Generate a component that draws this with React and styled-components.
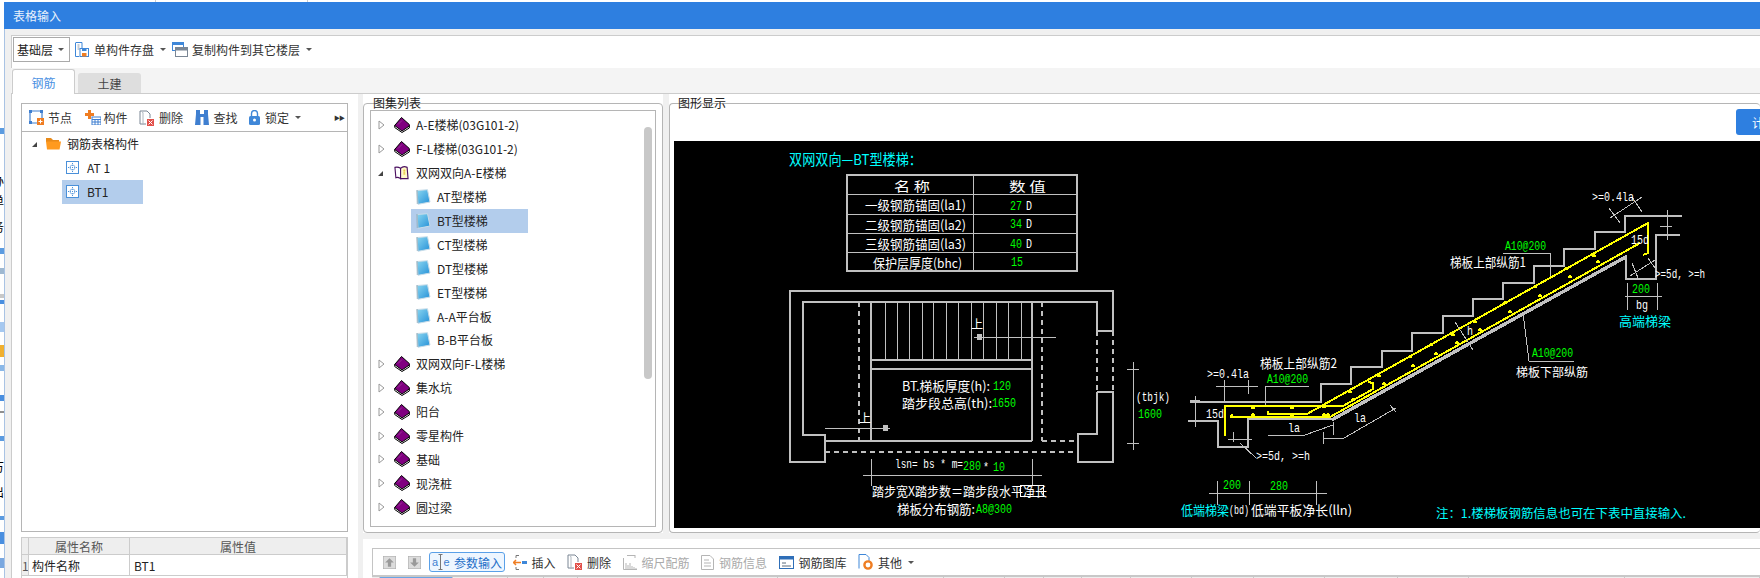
import React from 'react';
import styled, { createGlobalStyle } from 'styled-components';

const GlobalStyle = createGlobalStyle`
    html, body {
        margin: 0;
        padding: 0;
        background: #fff;
        overflow: hidden;
    }
    body {
        font-family: "Noto Sans CJK SC", "Noto Sans", sans-serif;
        font-size: 12px;
        color: #222;
    }
`;

const Page = styled.div`
    display: flex;
    width: 1760px;
    height: 578px;
    overflow: hidden;
`;

const Sliver = styled.svg`
    display: block;
    flex: none;
    width: 4px;
    height: 578px;
`;

const Window = styled.div`
    flex: 1;
    min-width: 0;
    display: flex;
    flex-direction: column;
    background: #f0f0f0;
`;

const TopEdge = styled.div`
    height: 2px;
    background: linear-gradient(#ccc, #ccc) 151px 0 / 1px 2px no-repeat,
        linear-gradient(#ccc, #ccc) 303px 0 / 1px 2px no-repeat, #fff;
`;

const TitleBar = styled.div`
    height: 27px;
    flex: none;
    display: flex;
    align-items: center;
    padding-left: 9px;
    background: #2e7fe0;
    color: #e8f1fc;
`;

const WindowBody = styled.div`
    flex: 1;
    min-height: 0;
    display: flex;
    flex-direction: column;
    padding: 6px 0 0 6px;
    border-left: 1px solid #a9c3e4;
`;

const TopToolbar = styled.div`
    height: 33px;
    flex: none;
    display: flex;
    align-items: center;
    padding: 0 0 5px 1px;
    box-sizing: border-box;
    background: #fff;
    border-top: 1px solid #ccc;
    border-left: 1px solid #ccc;
    color: #333;
`;

const Combo = styled.div`
    width: 57px;
    height: 25px;
    box-sizing: border-box;
    display: flex;
    align-items: center;
    justify-content: space-between;
    padding: 0 5px 0 3px;
    margin-right: 5px;
    border: 1px solid #aaa;
    color: #222;
`;

const Caret = styled.span`
    flex: none;
    width: 0;
    height: 0;
    margin: ${p => p.$margin || '0'};
    border-left: 3px solid transparent;
    border-right: 3px solid transparent;
    border-top: 3px solid #555;
`;

const ToolLabel = styled.span`
    margin-left: ${p => p.$gap || 5}px;
    white-space: nowrap;
    color: ${p => (p.$disabled ? '#aaa' : 'inherit')};
`;

const TabRow = styled.div`
    height: 25px;
    flex: none;
    display: flex;
    align-items: flex-end;
    gap: 3px;
    padding-left: 1px;
    background: #f4f4f4;
`;

const Tab = styled.div`
    width: ${p => p.$w}px;
    height: ${p => (p.$active ? 25 : 20)}px;
    box-sizing: border-box;
    display: flex;
    align-items: center;
    justify-content: center;
    border-radius: 3px 3px 0 0;
    background: ${p => (p.$active ? '#fff' : '#dedede')};
    color: ${p => (p.$active ? '#4a90e2' : '#444')};
    border: ${p => (p.$active ? '1px solid #ccc' : 'none')};
    border-bottom: none;
    position: relative;
    z-index: 1;
    margin-bottom: ${p => (p.$active ? -1 : 0)}px;
`;

const Main = styled.div`
    flex: 1;
    min-height: 0;
    display: flex;
    border-top: 1px solid #ccc;
    border-left: 1px solid #ccc;
`;

const LeftColumn = styled.div`
    width: 346px;
    flex: none;
    box-sizing: border-box;
    display: flex;
    flex-direction: column;
    padding: 9px 10px 0 9px;
    background: #fff;
`;

const LeftToolbar = styled.div`
    height: 28px;
    flex: none;
    box-sizing: border-box;
    display: flex;
    align-items: center;
    gap: 3.5px;
    padding: 0 3px 0 3px;
    border: 1px solid #b5b5b5;
    border-bottom: none;
    color: #333;
`;

const ToolButton = styled.div`
    display: flex;
    align-items: center;
    height: 20px;
    box-sizing: border-box;
    padding: 0 ${p => p.$pad ?? 4}px;
    flex: none;
    border-radius: 3px;
    border: ${p => (p.$active ? '1px solid #5aa0e8' : 'none')};
    background: ${p => (p.$active ? '#eef6ff' : 'transparent')};
    color: ${p => (p.$active ? '#1f6fc8' : 'inherit')};
`;

const MoreMark = styled.span`
    margin-left: auto;
    font-size: 6px;
    letter-spacing: -1px;
    color: #333;
`;

const TreeBox = styled.div`
    flex: 1;
    min-height: 0;
    position: relative;
    border: 1px solid #b5b5b5;
    background: #fff;
    padding-top: ${p => p.$top}px;
    overflow: hidden;
`;

const RootRow = styled.div`
    display: flex;
    align-items: center;
    height: 23.9px;
    padding-left: ${p => p.$pad}px;
`;

const ArrowOpen = styled.span`
    flex: none;
    width: 0;
    height: 0;
    margin: 2px ${p => p.$after}px 0 0;
    border-left: 5px solid transparent;
    border-bottom: 5px solid #444;
`;

const ItemRow = styled.div`
    height: 23.9px;
    display: flex;
    align-items: center;
    padding-left: ${p => p.$pad}px;
`;

const ItemCell = styled.div`
    width: ${p => p.$w}px;
    height: 24px;
    box-sizing: border-box;
    display: flex;
    align-items: center;
    padding-left: ${p => p.$inner}px;
    background: ${p => (p.$selected ? '#b3cdec' : 'transparent')};
`;

const PropGrid = styled.div`
    flex: none;
    margin-top: 5px;
    display: grid;
    grid-template-columns: 7px 101px 217px;
    grid-template-rows: 17px 21px 2px;
    border-left: 1px solid #ccc;
    border-right: 1px solid #ccc;
    border-top: 1px solid #ccc;
`;

const PropHead = styled.div`
    display: flex;
    align-items: center;
    justify-content: center;
    background: #eee;
    color: #555;
    border-right: 1px solid #ccc;
    border-bottom: 1px solid #ccc;
`;

const PropCell = styled.div`
    display: flex;
    align-items: center;
    padding-left: ${p => p.$pad || 0}px;
    background: ${p => (p.$head ? '#eee' : '#fff')};
    color: ${p => (p.$head ? '#555' : '#222')};
    border-right: 1px solid #ccc;
    border-bottom: 1px solid #ccc;
    overflow: hidden;
`;

const Splitter = styled.div`
    width: 5px;
    flex: none;
`;

const RightArea = styled.div`
    flex: 1;
    min-width: 0;
    display: flex;
    flex-direction: column;
`;

const PanelRow = styled.div`
    height: 439px;
    flex: none;
    display: flex;
    gap: 6px;
`;

const GroupPanel = styled.div`
    background: #fff;
    width: ${p => (p.$w ? `${p.$w}px` : 'auto')};
    flex: ${p => (p.$w ? 'none' : '1')};
    min-width: 0;
    box-sizing: border-box;
    padding-top: 9px;
`;

const GroupBox = styled.div`
    position: relative;
    height: 430px;
    box-sizing: border-box;
    display: flex;
    flex-direction: column;
    border: 1px solid #b5b5b5;
    border-right: ${p => (p.$open ? 'none' : '1px solid #b5b5b5')};
    border-radius: 4px;
    padding: ${p => p.$pad};
`;

const Legend = styled.span`
    position: absolute;
    left: ${p => p.$left}px;
    top: -8px;
    line-height: 14px;
    color: #222;
`;

const ScrollThumb = styled.div`
    position: absolute;
    right: 3px;
    top: 16px;
    width: 8px;
    height: 252px;
    border-radius: 4px;
    background: #c8c8c8;
`;

const ActionRow = styled.div`
    height: 37px;
    flex: none;
    display: flex;
    justify-content: flex-end;
    padding-top: 5px;
    box-sizing: border-box;
`;

const CalcButton = styled.div`
    width: 24px;
    height: 26px;
    box-sizing: border-box;
    padding: 5px 0 0 16px;
    background: #2e7fe0;
    color: #fff;
    border-radius: 3px 0 0 3px;
    overflow: hidden;
    white-space: nowrap;
`;

const CadSvg = styled.svg`
    display: block;
    width: 1086px;
    height: 387px;
    background: #000;
    shape-rendering: crispEdges;
`;

const GrayLine = styled.path`
    fill: none;
    stroke: ${p => p.$color || '#c0c0c0'};
    stroke-width: ${p => p.$w || 2};
    stroke-dasharray: ${p => p.$dash || 'none'};
`;

const CadText = styled.text`
    font-family: ${p => (p.$mono ? '"Liberation Mono", monospace' : '"Noto Sans CJK SC", sans-serif')};
    font-size: ${p => p.$size || 13}px;
    fill: ${p => p.$color || '#fff'};
`;

const BottomBand = styled.div`
    height: 6px;
    flex: none;
`;

const BottomPanel = styled.div`
    flex: 1;
    min-height: 0;
    background: #fff;
    padding: 9px 0 0 9px;
    display: flex;
    flex-direction: column;
`;

const ParamToolbar = styled.div`
    height: 27px;
    flex: none;
    box-sizing: border-box;
    display: flex;
    align-items: center;
    gap: 3.5px;
    padding-left: 5px;
    border: 1px solid #c4c4c4;
    border-right: none;
    border-bottom: none;
    color: #333;
`;

const HeaderStrip = styled.div`
    height: 3px;
    flex: none;
    display: flex;
    background: #eee;
    border-top: 2px solid #c8c8c8;
`;

const HeaderCell = styled.div`
    flex: none;
    width: ${p => p.$w}px;
    box-sizing: border-box;
    background: ${p => (p.$active ? '#6aa5e6' : 'transparent')};
    border-right: 1px solid #c8c8c8;
`;

const IconSvg = styled.svg`
    display: block;
    flex: none;
    width: ${p => p.$w || 16}px;
    height: ${p => p.$h || 16}px;
    margin-right: ${p => p.$after || 0}px;
`;

const ClosedArrow = () => (
    <IconSvg viewBox="0 0 7 10" $w={7} $h={10} $after={9}>
        <path d="M1 1L6 5L1 9Z" fill="#fff" stroke="#999" />
    </IconSvg>
);

const BookIcon = () => (
    <IconSvg viewBox="0 0 16 16" $w={16} $h={16} $after={6}>
        <path d="M.7 8.5V10.5L8 15.5L15.3 11V9Z" fill="#fff" stroke="#000" strokeWidth="1" />
        <path d="M.7 8.5L7.5 .5L15.3 7.5V9L8 14Z" fill="#800080" stroke="#000" strokeWidth="1" />
        <path d="M4 7.5L8 3.5" stroke="#a040a0" strokeWidth=".8" />
    </IconSvg>
);

const OpenBookIcon = () => (
    <IconSvg viewBox="0 0 16 16" $w={15} $h={16} $after={7}>
        <path d="M1 2 Q4 1 7 3 L7 14 Q4 12 2 13Z" fill="#fff" stroke="#4b1060" strokeWidth="1.2" />
        <path d="M7 3 Q10 0 14 2 L15 14 L7 14Z" fill="#fff8c8" stroke="#4b1060" strokeWidth="1.2" />
        <path d="M10 5H12M10 7H12M10 9H12" stroke="#e0b000" strokeWidth="1" />
    </IconSvg>
);

const PageIcon = () => (
    <IconSvg viewBox="0 0 15 16" $w={15} $h={16} $after={6}>
        <defs>
            <linearGradient id="pageFill" x1="0" y1="0" x2="1" y2="1">
                <stop offset="0" stopColor="#8ad6f0" />
                <stop offset="1" stopColor="#2490d8" />
            </linearGradient>
        </defs>
        <path d="M1 1.5 L11.5 .7 L14 13 L2 15.3Z" fill="url(#pageFill)" stroke="#c8dce8" strokeWidth="1" />
        <path d="M1 1.5L1.5 15.3" stroke="#7f9cab" strokeWidth="1.6" strokeDasharray="1 1" />
    </IconSvg>
);

const FolderIcon = () => (
    <IconSvg viewBox="0 0 15 13" $w={15} $h={13} $after={6}>
        <path d="M0 1 H5 L7 3 H13 V5 H0Z" fill="#e88a1a" />
        <path d="M0 4.5 H15 L13.5 12.5 H1Z" fill="#ff9a1f" />
    </IconSvg>
);

const ComponentIcon = () => (
    <IconSvg viewBox="0 0 13 13" $w={13} $h={13} $after={8}>
        <rect x="0.5" y="0.5" width="12" height="12" fill="#fff" stroke="#4a90d9" />
        <path d="M6.5 2V11M2 6.5H11" stroke="#4a90d9" strokeDasharray="1 1" />
        <path d="M4 6.5A2.5 2.5 0 0 1 9 6.5A2.5 2.5 0 0 1 4 6.5" fill="none" stroke="#8ab8e8" />
    </IconSvg>
);

const NodeIcon = () => (
    <IconSvg viewBox="0 0 15 15" $w={15} $h={15}>
        <path d="M1 1H13V8M8 13H1V1" fill="none" stroke="#3f7fd0" strokeWidth="1.2" />
        <path d="M0 0h3v3H0zM11 0h3v3h-3zM0 11h3v3H0z" fill="#3f7fd0" />
        <rect x="8" y="8" width="7" height="7" fill="#ef7d22" />
        <path d="M11.5 9.5v4M9.5 11.5h4" stroke="#fff" />
    </IconSvg>
);

const PartIcon = () => (
    <IconSvg viewBox="0 0 17 15" $w={17} $h={15}>
        <path d="M4 0v3H1v3h3v3h3V6h3V3H7V0z" fill="#ef7d22" />
        <rect x="8" y="7" width="9" height="8" fill="#fff" stroke="#3f7fd0" />
        <path d="M8 9.5h9M11 9.5V15M14 9.5V15M8 12h9" stroke="#3f7fd0" />
    </IconSvg>
);

const DeleteIcon = () => (
    <IconSvg viewBox="0 0 15 16" $w={15} $h={16}>
        <path d="M1 1H8L11 4V8M7 14H1V1" fill="none" stroke="#7a8694" />
        <path d="M3.5 3V2.5H4V15" fill="none" stroke="#b0b8c0" />
        <rect x="8" y="9" width="7" height="7" fill="#e2504a" />
        <path d="M9.5 10.5l4 4M13.5 10.5l-4 4" stroke="#fff" />
    </IconSvg>
);

const FindIcon = () => (
    <IconSvg viewBox="0 0 14 15" $w={14} $h={15}>
        <path d="M1 0H5V4H9V0H13V4L14 15H8.5V7H5.5V15H0L1 4Z" fill="#3f7fd0" />
    </IconSvg>
);

const LockIcon = () => (
    <IconSvg viewBox="0 0 11 15" $w={11} $h={15}>
        <path d="M2.5 6V3.5A3 3 0 0 1 8.5 3.5V6" fill="none" stroke="#3f87d8" strokeWidth="1.4" />
        <rect x="0" y="6" width="11" height="9" rx="1.5" fill="#3f87d8" />
        <circle cx="5.5" cy="10" r="1.5" fill="#fff" />
    </IconSvg>
);

const SaveIcon = () => (
    <IconSvg viewBox="0 0 14 15" $w={14} $h={15}>
        <path d="M1 .5H7V6M4 14.5H.5V.5" fill="none" stroke="#3f87d8" />
        <path d="M2.5 3h2M2.5 5h2M2.5 7h2" stroke="#8a98a8" />
        <rect x="5" y="6.5" width="8.5" height="8" fill="#fff" stroke="#3f87d8" />
        <rect x="7" y="11" width="4.5" height="3.5" fill="#ef7d22" />
        <rect x="7" y="7" width="4.5" height="2" fill="#3f87d8" />
    </IconSvg>
);

const CopyIcon = () => (
    <IconSvg viewBox="0 0 16 15" $w={16} $h={15}>
        <rect x=".5" y=".5" width="11" height="8" fill="#fff" stroke="#3f87d8" />
        <rect x=".5" y=".5" width="11" height="2.5" fill="#3f87d8" />
        <rect x="3.5" y="5.5" width="12" height="9" fill="#fff" stroke="#7a8694" />
        <rect x="3.5" y="5.5" width="12" height="3" fill="#7a8694" />
    </IconSvg>
);

const ArrowBoxIcon = ({ down }) => (
    <IconSvg viewBox="0 0 12 12" $w={13} $h={13}>
        <rect width="12" height="12" fill="#dcdcdc" stroke="#aaa" />
        <path d={down ? 'M6 10L2 6H4.5V2H7.5V6H10Z' : 'M6 2L10 6H7.5V10H4.5V6H2Z'} fill="#9a9a9a" />
    </IconSvg>
);

const ParamIcon = () => (
    <IconSvg viewBox="0 0 18 16" $w={18} $h={16}>
        <text x="0" y="12" fontSize="11" fill="#3f7fd0" fontFamily="Liberation Sans">a</text>
        <text x="11.5" y="12" fontSize="11" fill="#3f7fd0" fontFamily="Liberation Sans">e</text>
        <path d="M8.5 1V15M6.5 .5H10.5M6.5 15.5H10.5" stroke="#777" fill="none" />
    </IconSvg>
);

const InsertIcon = () => (
    <IconSvg viewBox="0 0 14 15" $w={14} $h={15}>
        <path d="M3 .5H6M3 14.5H6M3 .5V3M3 12V14.5" stroke="#777" fill="none" />
        <path d="M8 7.5H0M3 5L.5 7.5L3 10" stroke="#ef7d22" strokeWidth="1.5" fill="none" />
        <path d="M9 6h5v3H9z" fill="#3f87d8" />
    </IconSvg>
);

const ScaleIcon = () => (
    <IconSvg viewBox="0 0 14 15" $w={14} $h={15}>
        <path d="M.5 3V14.5H14M3 14V8M5 14V10M7 14V8M9 14V11M11 14V12M13 14V13M4 .5H12M12 0V3" stroke="#b5b5b5" fill="none" />
    </IconSvg>
);

const InfoIcon = () => (
    <IconSvg viewBox="0 0 13 15" $w={13} $h={15}>
        <path d="M.5.5H9L12.5 4V14.5H.5Z" fill="#fff" stroke="#b5b5b5" />
        <path d="M3 5H8M3 8H10M3 11H10" stroke="#b5b5b5" />
    </IconSvg>
);

const LibraryIcon = () => (
    <IconSvg viewBox="0 0 15 13" $w={15} $h={13}>
        <rect x=".5" y=".5" width="14" height="12" fill="#fff" stroke="#2f6fb8" />
        <rect x=".5" y=".5" width="14" height="3" fill="#2f6fb8" />
        <path d="M3 7H7M3 10H12" stroke="#5a6a7a" />
    </IconSvg>
);

const OtherIcon = () => (
    <IconSvg viewBox="0 0 15 16" $w={15} $h={16}>
        <path d="M1 14.5V.5H8L11 3.5V7" fill="none" stroke="#3f87d8" />
        <circle cx="10" cy="11" r="3.6" fill="none" stroke="#ef7d22" strokeWidth="2.4" />
    </IconSvg>
);

const sliverMarks = [
    ['#5b9be0', 128, 6], ['#5b9be0', 248, 6], ['#9fb8d0', 268, 6], ['#c8c8c8', 294, 4],
    ['#4a8fe0', 300, 4], ['#a5c8f0', 322, 10], ['#f0b030', 345, 12], ['#8ab8e8', 365, 6],
    ['#4a8fe0', 395, 6], ['#8f8f8f', 411, 2], ['#5b9be0', 436, 5], ['#5b9be0', 516, 4],
    ['#4a8fe0', 532, 12], ['#7aa8e0', 558, 10],
];

const sliverText = [['办', 186], ['单', 206], ['务', 232], ['万', 472], ['出', 497]];

const floorTree = [
    { name: 'A-E楼梯(03G101-2)' },
    { name: 'F-L楼梯(03G101-2)' },
    {
        name: '双网双向A-E楼梯',
        open: true,
        items: ['AT型楼梯', 'BT型楼梯', 'CT型楼梯', 'DT型楼梯', 'ET型楼梯', 'A-A平台板', 'B-B平台板'],
    },
    { name: '双网双向F-L楼梯' },
    { name: '集水坑' },
    { name: '阳台' },
    { name: '零星构件' },
    { name: '基础' },
    { name: '现浇桩' },
    { name: '圆过梁' },
];

const bottomCols = [8, 73, 55, 36, 34, 200, 166, 61, 39, 38, 49, 61, 62, 71, 73, 71, 156, 135];

const cyan = '#00ffff';
const green = '#00ff00';

// x, center y, width, size, color, text
const cadTexts = [
    [789, 159, 133, 15, cyan, '双网双向—BT型楼梯：'],
    [894, 186, 36, 13, null, '名  称'],
    [1009, 186, 37, 13, null, '数  值'],
    [865, 205, 101, 13, null, '一级钢筋锚固(la1)'],
    [865, 225, 101, 13, null, '二级钢筋锚固(la2)'],
    [865, 244, 101, 13, null, '三级钢筋锚固(la3)'],
    [873, 263, 89, 13, null, '保护层厚度(bhc)'],
    [902, 386, 88, 13, null, 'BT.梯板厚度(h):'],
    [902, 403, 90, 13, null, '踏步段总高(th):'],
    [872, 491, 175, 13, null, '踏步宽X踏步数＝踏步段水平净长'],
    [897, 509, 78, 13, null, '梯板分布钢筋:'],
    [1260, 363, 77, 13, null, '梯板上部纵筋2'],
    [1450, 262, 76, 13, null, '梯板上部纵筋1'],
    [1516, 372, 72, 12, null, '梯板下部纵筋'],
    [1619, 321, 52, 13, cyan, '高端梯梁'],
    [1181, 510, 48, 13, cyan, '低端梯梁'],
    [1251, 510, 101, 13, null, '低端平板净长(lln)'],
    [1436, 513, 250, 12, cyan, '注：1.楼梯板钢筋信息也可在下表中直接输入.'],
];

// x, center y, width, color, text
const cadMono = [
    [1010, 206, 12, green, '27'], [1026, 206, 6, null, 'D'],
    [1010, 224, 12, green, '34'], [1026, 224, 6, null, 'D'],
    [1010, 244, 12, green, '40'], [1026, 244, 6, null, 'D'],
    [1011, 262, 12, green, '15'],
    [993, 386, 18, green, '120'],
    [992, 403, 24, green, '1650'],
    [1136, 397, 34, null, '(tbjk)'],
    [1138, 414, 24, green, '1600'],
    [895, 464, 68, null, 'lsn= bs * m='],
    [963, 466, 18, green, '280'],
    [983, 467, 6, null, '*'],
    [993, 467, 12, green, '10'],
    [976, 509, 36, green, 'A8@300'],
    [1267, 379, 41, green, 'A10@200'],
    [1505, 246, 41, green, 'A10@200'],
    [1532, 353, 41, green, 'A10@200'],
    [1207, 374, 42, null, '>=0.4la'],
    [1592, 197, 42, null, '>=0.4la'],
    [1206, 414, 18, null, '15d'],
    [1631, 240, 18, null, '15d'],
    [1256, 456, 54, null, '>=5d, >=h'],
    [1655, 274, 50, null, '>=5d, >=h'],
    [1288, 428, 12, null, 'la'],
    [1354, 418, 12, null, 'la'],
    [1467, 331, 6, null, 'h'],
    [1223, 485, 18, green, '200'],
    [1270, 486, 18, green, '280'],
    [1632, 289, 18, green, '200'],
    [1636, 305, 12, null, 'bg'],
    [1229, 510, 20, null, '(bd)'],
];

const treadLines = [344, 380, 417, 455, 490, 528, 565, 602, 640, 677, 713, 752]
    .map(px => `M${Math.round(770 + px / 3)} 302V360`)
    .join('');

const barDots = [
    [73, 620], [150, 577], [238, 527], [330, 472], [392, 435], [458, 405], [525, 365], [615, 310],
    [705, 262], [797, 208], [883, 168], [85, 645], [160, 600], [252, 552], [340, 497], [408, 462],
    [472, 430], [540, 390], [630, 335], [720, 287], [810, 230], [893, 187],
].map(([x, y]) => [1300 + x / 3, 200 + y / 3]);

const flatDots = [[280, 235], [280, 255], [395, 235], [395, 258], [493, 232], [493, 255]]
    .map(([x, y]) => [1160 + x / 3, 330 + y / 3]);

const dotPath = [...barDots, ...flatDots]
    .map(([x, y]) => `M${Math.round(x) - 2} ${Math.round(y)}h4M${Math.round(x)} ${Math.round(y) - 2}v3`)
    .join('');

const StairDrawing = () => (
    <CadSvg viewBox="674 141 1086 387">
        {/* 表格 */}
        <GrayLine d="M847 175H1077V271H847Z" />
        <GrayLine $w={1} d="M973 175V271M847 194H1077M847 214H1077M847 233H1077M847 252H1077" />

        {/* 平面图 */}
        <GrayLine d="M1113 331V291H790V462H825V435H803V302H1097V331H1113" />
        <GrayLine d="M1097 392H1113V462H1078V434H1097V392" />
        <GrayLine $dash="5 4" d="M1097 331V392M1113 331V392" />
        <GrayLine d="M871 302V441M1032 302V441M825 441H1032M871 360H1032M871 369H1032" />
        <GrayLine $dash="5 4" d="M859 302V441M1042 302V441M1042 441H1078M825 452H1078" />
        <GrayLine $w={1} d={treadLines} />
        <GrayLine $w={1} d="M974 337H1056M825 428H890M1133 362V450M1127 369H1139M1127 443H1139M863 475H1042M871 459V486M1032 459V486" />
        <GrayLine $w={1} $color="#fff" d="M1020 485H1043V496H1020Z" />
        <path d="M977 334h5v6h-5zM883 425h5v6h-5z" fill="#c0c0c0" />

        {/* 剖面图 */}
        <GrayLine d="M1190 402H1321V384H1351V367H1382V351H1412V333H1443V316H1473V299H1503V283H1534V266H1564V249H1595V232H1625V216H1682" />
        <GrayLine d="M1680 235H1656V279H1626V256L1332 419H1248V447H1218V421H1188" />
        <GrayLine $w={3} d="M1332 420L1626 257" />
        <GrayLine
            $color="#ffff00"
            d="M1225 436V406H1343L1373 389V383L1368 382M1268 411V414H1307L1648 223V253L1643 255M1232 414L1231 417H1330L1640 243"
        />
        <GrayLine $color="#ffff00" $w={1.5} d={dotPath} />
        <GrayLine
            $w={1}
            d="M1265 405V386H1309M1216 386H1258M1224 380V402M1248 380V394M1190 400H1200M1195 396V427M1188 421H1200M1233 432V442M1228 439H1252M1240 443L1256 458M1268 435H1305L1333 425M1333 422V435M1323 438H1344L1396 408M1390 405L1396 412M1323 432V444M1209 493H1327M1217 481V505M1249 481V505M1316 481V505"
        />
        <GrayLine
            $w={1}
            d="M1503 253H1550V276M1523 313L1529 361H1574M1610 218L1642 197M1609 208L1620 223M1632 197L1642 212M1667 210V240M1660 226H1672M1630 276L1655 260M1632 263L1638 278M1648 258L1655 268M1625 296H1662M1627 283V310M1657 283V310M1455 322L1473 350"
        />

        <CadText x="971" y="329" $size={12}>上</CadText>
        <CadText x="859" y="423" $size={12}>上</CadText>

        {cadTexts.map(([x, y, w, size, color, text]) => (
            <CadText
                key={`${x}-${y}`}
                x={x}
                y={y + size * 0.38}
                $size={size}
                $color={color}
                textLength={w}
                lengthAdjust="spacingAndGlyphs"
            >
                {text}
            </CadText>
        ))}
        {cadMono.map(([x, y, w, color, text]) => (
            <CadText
                key={`${x}-${y}-${text}`}
                x={x}
                y={y + 4}
                $mono
                $size={13}
                $color={color}
                textLength={w}
                lengthAdjust="spacingAndGlyphs"
            >
                {text}
            </CadText>
        ))}
    </CadSvg>
);

const FloorTree = () => (
    <TreeBox $top={2}>
        {floorTree.map(group => (
            <React.Fragment key={group.name}>
                <RootRow $pad={7}>
                    {group.open ? <ArrowOpen $after={11} /> : <ClosedArrow />}
                    {group.open ? <OpenBookIcon /> : <BookIcon />}
                    {group.name}
                </RootRow>
                {group.items && group.items.map(item => (
                    <ItemRow key={item} $pad={40}>
                        <ItemCell $w={117} $inner={5} $selected={item === 'BT型楼梯'}>
                            <PageIcon />
                            {item}
                        </ItemCell>
                    </ItemRow>
                ))}
            </React.Fragment>
        ))}
        <ScrollThumb />
    </TreeBox>
);

const App = () => (
    <>
        <GlobalStyle />
        <Page>
            <Sliver viewBox="0 0 4 578">
                <rect width="4" height="578" fill="#fff" />
                {sliverMarks.map(([color, y, h]) => (
                    <rect key={y} x="0" y={y} width="4" height={h} fill={color} />
                ))}
                {sliverText.map(([text, y]) => (
                    <text key={y} x="-8" y={y} fontSize="12" fontFamily="Noto Sans CJK SC">{text}</text>
                ))}
            </Sliver>
            <Window>
                <TopEdge />
                <TitleBar>表格输入</TitleBar>
                <WindowBody>
                    <TopToolbar>
                        <Combo>基础层<Caret /></Combo>
                        <SaveIcon />
                        <ToolLabel>单构件存盘</ToolLabel>
                        <Caret $margin="0 6px 0 6px" />
                        <CopyIcon />
                        <ToolLabel $gap={4}>复制构件到其它楼层</ToolLabel>
                        <Caret $margin="0 0 0 6px" />
                    </TopToolbar>
                    <TabRow>
                        <Tab $w={63} $active>钢筋</Tab>
                        <Tab $w={63}>土建</Tab>
                    </TabRow>
                    <Main>
                        <LeftColumn>
                            <LeftToolbar>
                                <ToolButton><NodeIcon /><ToolLabel $gap={4}>节点</ToolLabel></ToolButton>
                                <ToolButton><PartIcon /><ToolLabel $gap={3}>构件</ToolLabel></ToolButton>
                                <ToolButton><DeleteIcon /><ToolLabel>删除</ToolLabel></ToolButton>
                                <ToolButton><FindIcon /><ToolLabel>查找</ToolLabel></ToolButton>
                                <ToolButton>
                                    <LockIcon />
                                    <ToolLabel>锁定</ToolLabel>
                                    <Caret $margin="0 0 0 6px" />
                                </ToolButton>
                                <MoreMark>▶▶</MoreMark>
                            </LeftToolbar>
                            <TreeBox $top={0}>
                                <RootRow $pad={10}>
                                    <ArrowOpen $after={9} />
                                    <FolderIcon />
                                    钢筋表格构件
                                </RootRow>
                                <ItemRow $pad={40}>
                                    <ItemCell $w={81} $inner={4}><ComponentIcon />AT 1</ItemCell>
                                </ItemRow>
                                <ItemRow $pad={40}>
                                    <ItemCell $w={81} $inner={4} $selected><ComponentIcon />BT1</ItemCell>
                                </ItemRow>
                            </TreeBox>
                            <PropGrid>
                                <PropCell $head />
                                <PropHead>属性名称</PropHead>
                                <PropHead>属性值</PropHead>
                                <PropCell $head>1</PropCell>
                                <PropCell $pad={3}>构件名称</PropCell>
                                <PropCell $pad={4}>BT1</PropCell>
                            </PropGrid>
                        </LeftColumn>
                        <Splitter />
                        <RightArea>
                            <PanelRow>
                                <GroupPanel $w={300}>
                                    <GroupBox $pad="6px 6px 5px 6px">
                                        <Legend $left={9}>图集列表</Legend>
                                        <FloorTree />
                                    </GroupBox>
                                </GroupPanel>
                                <GroupPanel>
                                    <GroupBox $open $pad="0 0 4px 4px">
                                        <Legend $left={8}>图形显示</Legend>
                                        <ActionRow><CalcButton>计算设置</CalcButton></ActionRow>
                                        <StairDrawing />
                                    </GroupBox>
                                </GroupPanel>
                            </PanelRow>
                            <BottomBand />
                            <BottomPanel>
                                <ParamToolbar>
                                    <ToolButton $pad={4.5}><ArrowBoxIcon /></ToolButton>
                                    <ToolButton $pad={4.5}><ArrowBoxIcon down /></ToolButton>
                                    <ToolButton $active $pad={2}><ParamIcon /><ToolLabel $gap={4}>参数输入</ToolLabel></ToolButton>
                                    <ToolButton><InsertIcon /><ToolLabel>插入</ToolLabel></ToolButton>
                                    <ToolButton><DeleteIcon /><ToolLabel>删除</ToolLabel></ToolButton>
                                    <ToolButton><ScaleIcon /><ToolLabel $disabled>缩尺配筋</ToolLabel></ToolButton>
                                    <ToolButton><InfoIcon /><ToolLabel $disabled>钢筋信息</ToolLabel></ToolButton>
                                    <ToolButton><LibraryIcon /><ToolLabel>钢筋图库</ToolLabel></ToolButton>
                                    <ToolButton>
                                        <OtherIcon />
                                        <ToolLabel>其他</ToolLabel>
                                        <Caret $margin="0 0 0 6px" />
                                    </ToolButton>
                                </ParamToolbar>
                                <HeaderStrip>
                                    {bottomCols.map((w, i) => (
                                        <HeaderCell key={i} $w={w} $active={i === 1} />
                                    ))}
                                </HeaderStrip>
                            </BottomPanel>
                        </RightArea>
                    </Main>
                </WindowBody>
            </Window>
        </Page>
    </>
);

export default App;
